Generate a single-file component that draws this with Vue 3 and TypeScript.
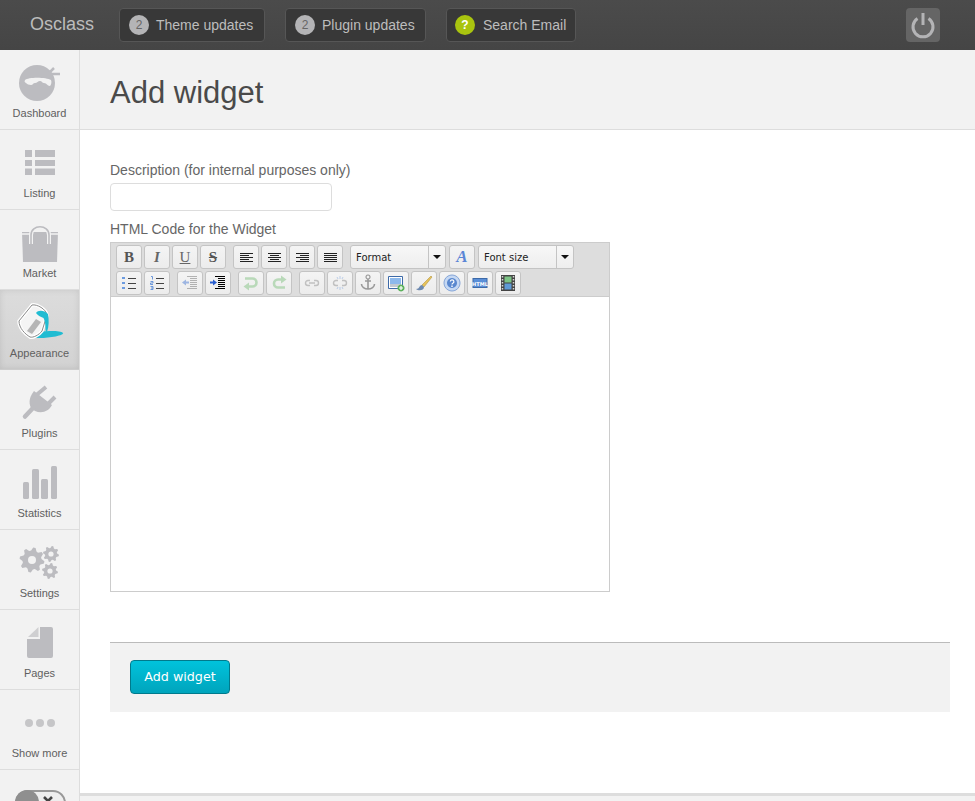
<script setup lang="ts">
interface Shape { d: string; s?: string; f?: string; w?: number }
interface Tool { name: string; text?: string; cls?: string; shapes?: Shape[] }

const K = '#222'
const lines = (rows: Array<[number, number]>, s = K): Shape => ({
  d: rows.map((r, i) => `M${r[0]} ${6.5 + i * 2}H${r[1]}`).join(''),
  s,
  w: 1
})

const alignLeft = [lines([[4, 17], [4, 13], [4, 17], [4, 13], [4, 17]])]
const alignCenter = [lines([[4, 17], [6, 15], [4, 17], [6, 15], [4, 17]])]
const alignRight = [lines([[4, 17], [8, 17], [4, 17], [8, 17], [4, 17]])]
const alignFull = [lines([[4, 17], [4, 17], [4, 17], [4, 17], [4, 17]])]

const rowOne: Tool[][] = [
  [
    { name: 'bold', text: 'B', cls: 't-bold' },
    { name: 'italic', text: 'I', cls: 't-italic' },
    { name: 'underline', text: 'U', cls: 't-under' },
    { name: 'strike', text: 'S', cls: 't-strike' }
  ],
  [
    { name: 'left', shapes: alignLeft },
    { name: 'center', shapes: alignCenter },
    { name: 'right', shapes: alignRight },
    { name: 'full', shapes: alignFull }
  ]
]

const rowTwo: Tool[][] = [
  [
    {
      name: 'ul',
      shapes: [
        { d: 'M3 4h3v2H3zM3 9h3v2H3zM3 14h3v2H3z', f: '#6c9be0' },
        { d: 'M9 5.500h8M9 10.500h8M9 15.500h8', s: '#444', w: 1 }
      ]
    },
    {
      name: 'ol',
      shapes: [
        { d: 'M4 3.500h1.500v3M3.500 8.500h2.500v1.500h-2.500v1.500h2.500M3.500 13.500h2.500v3h-2.500M4 15h2', s: '#5f8fd8', w: 0.9 },
        { d: 'M9 5.500h8M9 10.500h8M9 15.500h8', s: '#444', w: 1 }
      ]
    }
  ],
  [
    {
      name: 'outdent',
      cls: 'dim',
      shapes: [
        { d: 'M7 3.500h10M10 5.500h7M10 7.500h7M10 9.500h7M10 11.500h7M10 13.500h7M7 15.500h10', s: '#666', w: 1 },
        { d: 'M2 9.500l4-3v2h3v2H6v2z', f: '#3a6fd0' }
      ]
    },
    {
      name: 'indent',
      shapes: [
        { d: 'M7 3.500h10M10 5.500h7M10 7.500h7M10 9.500h7M10 11.500h7M10 13.500h7M7 15.500h10', s: '#000', w: 1 },
        { d: 'M9 9.500l-4-3v2H2v2h3v2z', f: '#2a5fd0' }
      ]
    }
  ],
  [
    {
      name: 'undo',
      shapes: [
        { d: 'M4 5.500h7.500a4 4 0 0 1 0 8H7', s: '#b9d9b9', w: 2.600 },
        { d: 'M2.500 13.500L8 9.500v8z', f: '#b9d9b9' }
      ]
    },
    {
      name: 'redo',
      shapes: [
        { d: 'M16 14.500H9a4 4 0 0 1 0-8h4', s: '#b9d9b9', w: 2.600 },
        { d: 'M17.500 6.500L12 2.500v8z', f: '#b9d9b9' }
      ]
    }
  ],
  [
    {
      name: 'link',
      cls: 'dim',
      shapes: [{ d: 'M8 7.500H6a2.500 2.500 0 0 0 0 5h2M12 7.500h2a2.500 2.500 0 0 1 0 5h-2M7 10h6', s: '#888', w: 1.400 }]
    },
    {
      name: 'unlink',
      cls: 'dim',
      shapes: [
        { d: 'M8 7.500H6a2.500 2.500 0 0 0 0 5h2M12 7.500h2a2.500 2.500 0 0 1 0 5h-2', s: '#888', w: 1.400 },
        { d: 'M10 3v3M10 14v3M7 4l1 2M13 4l-1 2M7 16l1-2M13 16l-1-2', s: '#5a8ed8', w: 0.800 }
      ]
    },
    {
      name: 'anchor',
      shapes: [
        { d: 'M10 6v10M7 8h6M3.500 11c0 3 3 5 6.500 5s6.500-2 6.500-5', s: '#999', w: 1.600 },
        { d: 'M10 2a2 2 0 1 0 .01 0z', s: '#999', w: 1.200 }
      ]
    },
    {
      name: 'image',
      shapes: [
        { d: 'M2.500 3.500h14v12h-14z', f: '#fff', s: '#3d6aa8', w: 1 },
        { d: 'M4 5h11v6H4z', f: '#8db9ec' },
        { d: 'M4 11h11v3H4z', f: '#c3c9d0' },
        { d: 'M15 11.500a3.500 3.500 0 1 0 .01 0z', f: '#5cb25c' },
        { d: 'M15 13v4M13 15h4', s: '#fff', w: 1.200 }
      ]
    },
    {
      name: 'cleanup',
      shapes: [
        { d: 'M8 12L17 3l1 1-8 10z', f: '#e6c25a', s: '#a98a35', w: 0.500 },
        { d: 'M8 12c-3 0-2 4-6 4 2 2 8 2 8-2z', f: '#6d89b0' }
      ]
    },
    {
      name: 'help',
      shapes: [
        { d: 'M10 2a8 8 0 1 0 .01 0z', f: '#c5d8f3', s: '#86a6d8', w: 1 },
        { d: 'M10 5a5 5 0 1 0 .01 0z', f: '#5a88cf' },
        { d: 'M8.300 8.500a1.800 1.800 0 1 1 2.500 1.800c-.7.400-.8.700-.8 1.200', s: '#fff', w: 1.200 },
        { d: 'M9.300 12.500h1.400v1.400H9.300z', f: '#fff' }
      ]
    }
  ]
]

const gear = (cx: number, cy: number, r: number, t: number): string => {
  let d = ''
  for (let i = 0; i < t * 4; i++) {
    const a = (i / (t * 4)) * Math.PI * 2 + Math.PI / (t * 4)
    const rr = i % 4 < 2 ? r : r * 0.76
    d += `${i ? 'L' : 'M'}${(cx + Math.cos(a) * rr).toFixed(1)} ${(cy + Math.sin(a) * rr).toFixed(1)}`
  }
  return d + 'Z'
}
const gearLarge = gear(32, 30, 12.500, 8)
const gearTop = gear(51, 24, 8, 8)
const gearBottom = gear(50, 41, 8, 8)

const nav = ['Dashboard', 'Listing', 'Market', 'Appearance', 'Plugins', 'Statistics', 'Settings', 'Pages', 'Show more']
</script>

<template>
  <div class="page">
    <header class="topbar">
      <span class="brand">Osclass</span>
      <div class="pills">
        <a class="pill theme"><span class="count">2</span>Theme updates</a>
        <a class="pill plugin"><span class="count">2</span>Plugin updates</a>
        <a class="pill email"><span class="count help">?</span>Search Email</a>
      </div>
      <a class="power" aria-label="Log out">
        <svg width="34" height="34" viewBox="0 0 34 34">
          <path d="M11.500 10.500a10 10 0 1 0 11 0" fill="none" stroke="#b4b4b6" stroke-width="3" />
          <path d="M17 5v12" stroke="#b4b4b6" stroke-width="3" />
        </svg>
      </a>
    </header>

    <div class="body">
      <nav class="sidebar">
        <a v-for="item in nav" :key="item" class="nav-item" :class="{ active: item === 'Appearance' }">
          <svg class="nav-icon" width="79" height="60" viewBox="0 0 79 60">
            <g v-if="item === 'Dashboard'" fill="#bcbcc0">
              <circle cx="37" cy="33" r="18" />
              <path d="M25 30c3-3 21-3 26 0 1 2 0 5-1 6-3 0-3-3-6-3-2 0-2-2-4-2s-3 2-5 2-2 2-4 2-4-1-5-2c-1-1-2-1-1-3z" fill="#f2f2f2" />
              <path d="M49 23l5-5M50 24l10 0" stroke="#bcbcc0" stroke-width="2.500" fill="none" />
            </g>
            <g v-else-if="item === 'Listing'" fill="#bcbcc0">
              <path d="M25 20h7v7h-7zM35 20h20v7H35zM25 30h7v6h-7zM35 30h20v6H35zM25 38.500h7V45h-7zM35 38.500h20V45H35z" />
            </g>
            <g v-else-if="item === 'Market'">
              <path d="M22 22h36l-1 30H23z" fill="#bcbcc0" />
              <path d="M31 34v-9c0-11 18-11 18 0v9" fill="none" stroke="#f2f2f2" stroke-width="4" />
              <path d="M31 34v-9c0-11 18-11 18 0v9" fill="none" stroke="#bcbcc0" stroke-width="1.600" />
              <path d="M22 24h8M50 24h8" stroke="#f2f2f2" stroke-width="1.500" />
            </g>
            <g v-else-if="item === 'Appearance'">
              <path d="M33 43c8-2 27-3 30 0 2 3-25 7-31 4-2-1-1-3 1-4z" fill="#21bcd2" />
              <path d="M19 31L32 15c5-1 14 4 15 10l-5 16c-3 4-9 7-12 6-5-3-11-9-11-16z" fill="#f4f4f4" stroke="#fff" stroke-width="3.500" stroke-linejoin="round" />
              <path d="M19 31L32 15c5-1 14 4 15 10l-5 16c-3 4-9 7-12 6-5-3-11-9-11-16z" fill="none" stroke="#8a8a8a" stroke-width="1" stroke-linejoin="round" />
              <path d="M27 41l9-12 5 3-9 12z" fill="#b5b5b5" />
              <path d="M36 23c2-3 8-3 12 1 1 6 1 12-1 18-1 0-1.500-1-1.500-3 0-5-.5-8-2-11-3-1-6-3-7.500-5z" fill="#21bcd2" />
            </g>
            <g v-else-if="item === 'Plugins'" fill="none" stroke="#bcbcc0">
              <path d="M34 27l12-10M44 38l11-11" stroke-width="4" />
              <path d="M34 21l18 14c-3 6-10 9-17 6l-4-3c-3-6-1-12 3-17z" fill="#bcbcc0" stroke="none" />
              <path d="M33 38l-8 8.500" stroke-width="4.500" stroke-linecap="round" />
            </g>
            <g v-else-if="item === 'Statistics'" fill="#bcbcc0">
              <rect x="23" y="32" width="6" height="17" rx="1.500" />
              <rect x="32" y="19" width="7" height="30" rx="1.500" />
              <rect x="41" y="29" width="7" height="20" rx="1.500" />
              <rect x="51" y="16" width="6" height="33" rx="1.500" />
            </g>
            <g v-else-if="item === 'Settings'">
              <path :d="gearLarge" fill="#bcbcc0" />
              <circle cx="32" cy="30" r="4" fill="#f2f2f2" />
              <path :d="gearTop" fill="#bcbcc0" />
              <circle cx="51" cy="24" r="2.600" fill="#f2f2f2" />
              <path :d="gearBottom" fill="#bcbcc0" />
              <circle cx="50" cy="41" r="2.600" fill="#f2f2f2" />
            </g>
            <g v-else-if="item === 'Pages'">
              <path d="M40 17h11a2 2 0 0 1 2 2v27a2 2 0 0 1-2 2H29a2 2 0 0 1-2-2V29h13z" fill="#bcbcc0" />
              <path d="M28 27L38.500 17v10z" fill="#cfcfd1" />
            </g>
            <g v-else fill="#c6c6c8">
              <circle cx="29" cy="33" r="4" />
              <circle cx="40" cy="33" r="4" />
              <circle cx="51" cy="33" r="4" />
            </g>
          </svg>
          <span class="nav-label">{{ item }}</span>
        </a>
        <div class="toggle-cell">
          <div class="toggle">
            <span class="knob"></span>
            <svg class="cross" width="12" height="12" viewBox="0 0 12 12">
              <path d="M2 2l8 8M10 2l-8 8" stroke="#444" stroke-width="2.600" />
            </svg>
          </div>
        </div>
      </nav>

      <main class="main">
        <div class="title-bar">
          <h1>Add widget</h1>
        </div>
        <div class="content">
          <form class="form" @submit.prevent>
            <label class="label" for="description">Description (for internal purposes only)</label>
            <input id="description" class="text-input" type="text" />
            <label class="label code-label">HTML Code for the Widget</label>

            <div class="editor">
              <div class="toolbar">
                <div class="tool-row">
                  <div v-for="(group, g) in rowOne" :key="g" class="tool-group">
                    <button v-for="tool in group" :key="tool.name" type="button" class="tool" :class="tool.cls">
                      <template v-if="tool.text">{{ tool.text }}</template>
                      <svg v-else width="20" height="20" viewBox="0 0 20 20">
                        <path
                          v-for="(sh, i) in tool.shapes"
                          :key="i"
                          :d="sh.d"
                          :fill="sh.f ?? 'none'"
                          :stroke="sh.s ?? 'none'"
                          :stroke-width="sh.w ?? 1"
                        />
                      </svg>
                    </button>
                  </div>
                  <div class="tool-group tight">
                    <div class="select format">
                      <span class="select-text">Format</span>
                      <span class="select-arrow"></span>
                    </div>
                    <button type="button" class="tool">
                      <span class="font-a">A</span>
                    </button>
                    <div class="select size">
                      <span class="select-text">Font size</span>
                      <span class="select-arrow"></span>
                    </div>
                  </div>
                </div>
                <div class="tool-row">
                  <div v-for="(group, g) in rowTwo" :key="g" class="tool-group">
                    <button v-for="tool in group" :key="tool.name" type="button" class="tool" :class="tool.cls">
                      <svg width="20" height="20" viewBox="0 0 20 20">
                        <path
                          v-for="(sh, i) in tool.shapes"
                          :key="i"
                          :d="sh.d"
                          :fill="sh.f ?? 'none'"
                          :stroke="sh.s ?? 'none'"
                          :stroke-width="sh.w ?? 1"
                        />
                      </svg>
                    </button>
                    <template v-if="g === 3">
                      <button type="button" class="tool">
                        <svg width="20" height="20" viewBox="0 0 20 20">
                          <rect x="3" y="5.500" width="14" height="9" fill="#5a8fd8" stroke="#3d6aa8" />
                          <text x="10" y="12.500" text-anchor="middle" font-size="5" font-weight="700" font-family="'DejaVu Sans', sans-serif" fill="#fff">HTML</text>
                        </svg>
                      </button>
                      <button type="button" class="tool">
                        <svg width="20" height="20" viewBox="0 0 20 20">
                          <rect x="3" y="2" width="14" height="16" fill="#444" />
                          <rect x="6.500" y="3.500" width="7" height="6" fill="#7cc486" />
                          <rect x="6.500" y="10.500" width="7" height="6" fill="#5f9ad6" />
                          <path d="M4.500 3v14M15.500 3v14" stroke="#d8d8d8" stroke-width="1.500" stroke-dasharray="1.500 1.500" />
                        </svg>
                      </button>
                    </template>
                  </div>
                </div>
              </div>
              <div class="editor-area"></div>
            </div>

            <div class="actions">
              <button type="submit" class="submit">Add widget</button>
            </div>
          </form>
        </div>
        <div class="page-footer"></div>
      </main>
    </div>
  </div>
</template>

<style>
html,
body {
  margin: 0;
  overflow: hidden;
  background: #fff;
}
</style>

<style scoped>
.page {
  width: 975px;
  height: 801px;
  overflow: hidden;
  display: flex;
  flex-direction: column;
  font-family: "Liberation Sans", Arial, sans-serif;
  color: #666;
}
.topbar {
  height: 50px;
  flex: none;
  box-sizing: border-box;
  display: flex;
  align-items: center;
  padding: 0 35px 0 30px;
  background: linear-gradient(#4b4b4b, #454545);
}
.brand {
  font-size: 18px;
  color: #bcbcbc;
  width: 89px;
  margin-top: -1px;
}
.pills {
  display: flex;
  gap: 20px;
  flex: 1;
}
.pill {
  box-sizing: border-box;
  height: 34px;
  display: flex;
  align-items: center;
  padding-left: 9px;
  background: #383838;
  border: 1px solid #565656;
  border-radius: 4px;
  color: #bdbdbd;
  font-size: 14px;
  white-space: nowrap;
}
.theme {
  width: 146px;
}
.plugin {
  width: 141px;
}
.email {
  width: 130px;
  padding-left: 8px;
}
.count {
  width: 20px;
  height: 20px;
  border-radius: 50%;
  background: #b4b4b6;
  color: #666;
  font-size: 12px;
  display: flex;
  align-items: center;
  justify-content: center;
  margin-right: 7px;
}
.count.help {
  background: #a9c40f;
  color: #fff;
  font-weight: 700;
  margin-right: 8px;
}
.power {
  width: 34px;
  height: 34px;
  background: #656565;
  border-radius: 4px;
}
.power svg {
  display: block;
}
.body {
  flex: 1;
  display: flex;
  min-height: 0;
}
.sidebar {
  width: 80px;
  flex: none;
  box-sizing: border-box;
  background: #f2f2f2;
  border-right: 1px solid #ddd;
  overflow: hidden;
}
.nav-item {
  display: block;
  height: 80px;
  box-sizing: border-box;
  border-bottom: 1px solid #ddd;
  text-align: center;
}
.nav-item.active {
  background: linear-gradient(#dcdcdc, #d2d2d2);
  box-shadow: inset 0 0 6px rgba(0, 0, 0, 0.1);
  border-bottom-color: #ccc;
}
.nav-icon {
  display: block;
}
.nav-label {
  display: block;
  font-size: 11px;
  line-height: 13px;
  margin-top: -3px;
  color: #606060;
}
.toggle-cell {
  padding: 20px 0 0 15px;
}
.toggle {
  position: relative;
  box-sizing: border-box;
  width: 51px;
  height: 26px;
  border-radius: 13px;
  border: 2px solid #999;
  background: #eee;
}
.knob {
  position: absolute;
  left: -2px;
  top: -2px;
  width: 24px;
  height: 24px;
  border-radius: 50%;
  background: #8f8f8f;
}
.cross {
  position: absolute;
  left: 25px;
  top: 3px;
}
.main {
  flex: 1;
  min-width: 0;
  display: flex;
  flex-direction: column;
}
.title-bar {
  height: 80px;
  box-sizing: border-box;
  background: #f2f2f2;
  border-bottom: 1px solid #ddd;
  padding: 0 30px;
  display: flex;
  align-items: center;
}
h1 {
  margin: 6px 0 0;
  font-size: 31px;
  font-weight: 400;
  color: #4a4a4a;
}
.content {
  flex: 1;
  padding: 32px 25px 0 30px;
}
.form {
  display: flex;
  flex-direction: column;
  align-items: flex-start;
}
.label {
  font-size: 14px;
  line-height: 16px;
  color: #666;
}
.text-input {
  box-sizing: border-box;
  width: 222px;
  height: 28px;
  margin: 5px 0 10px;
  border: 1px solid #ddd;
  border-radius: 4px;
  background: #fff;
  padding: 0 8px;
  outline: none;
}
.code-label {
  margin-bottom: 5px;
}
.editor {
  box-sizing: border-box;
  width: 500px;
  height: 350px;
  border: 1px solid #ccc;
  display: flex;
  flex-direction: column;
}
.toolbar {
  height: 54px;
  flex: none;
  box-sizing: border-box;
  background: #ddd;
  border-bottom: 1px solid #ccc;
  padding: 2px 0 0 5px;
  display: flex;
  flex-direction: column;
  gap: 2px;
}
.tool-row {
  display: flex;
  gap: 7px;
}
.tool-group {
  display: flex;
  gap: 2px;
}
.tool-group.tight {
  gap: 3px;
}
.tool {
  box-sizing: border-box;
  width: 26px;
  height: 24px;
  padding: 0;
  border: 1px solid #c4c4c4;
  border-radius: 3px;
  background: linear-gradient(#f4f4f4, #ececec);
  display: flex;
  align-items: center;
  justify-content: center;
  font-family: "Liberation Serif", "Times New Roman", serif;
  font-size: 15px;
  color: #555;
}
.tool svg {
  display: block;
}
.tool.dim svg {
  opacity: 0.45;
}
.t-bold {
  font-weight: 700;
}
.t-italic {
  font-style: italic;
  font-weight: 700;
  color: #666;
}
.t-under {
  text-decoration: underline;
  color: #666;
}
.t-strike {
  text-decoration: line-through;
  font-weight: 700;
  color: #555;
}
.font-a {
  font-family: "Liberation Serif", serif;
  font-weight: 700;
  font-style: italic;
  font-size: 17px;
  color: #5b86d6;
}
.select {
  box-sizing: border-box;
  height: 24px;
  display: flex;
  border: 1px solid #c4c4c4;
  border-radius: 3px;
  background: linear-gradient(#f7f7f7, #eeeeee);
  font-family: "DejaVu Sans", Verdana, sans-serif;
  font-size: 10px;
  color: #222;
}
.format {
  width: 96px;
}
.size {
  width: 96px;
}
.select-text {
  flex: 1;
  padding-left: 5px;
  line-height: 24px;
}
.select-arrow {
  width: 16px;
  flex: none;
  border-left: 1px solid #c4c4c4;
  position: relative;
}
.select-arrow::after {
  content: "";
  position: absolute;
  left: 4px;
  top: 9px;
  border: 4px solid transparent;
  border-top: 4px solid #111;
  border-bottom: 0;
}
.editor-area {
  flex: 1;
  background: #fff;
}
.actions {
  box-sizing: border-box;
  align-self: stretch;
  height: 70px;
  margin-top: 50px;
  padding: 17px 20px;
  background: #f2f2f2;
  border-top: 1px solid #bbb;
}
.submit {
  box-sizing: border-box;
  width: 100px;
  height: 34px;
  padding: 0 0 2px;
  border: 1px solid #007a8c;
  border-radius: 4px;
  background: linear-gradient(#00c3dc, #00a4bc);
  color: #fff;
  font-family: "DejaVu Sans", Verdana, sans-serif;
  font-size: 12.700px;
}
.page-footer {
  height: 8px;
  flex: none;
  box-sizing: border-box;
  background: #f2f2f2;
  border-top: 3px solid #ddd;
}
</style>
